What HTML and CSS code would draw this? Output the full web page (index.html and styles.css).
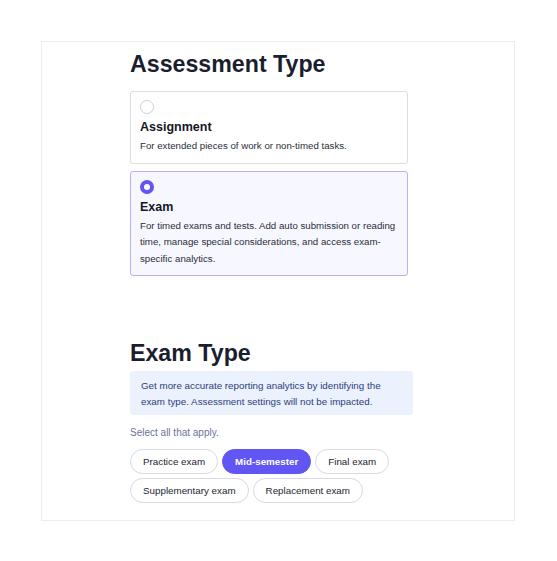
FILE: index.html
```html
<!DOCTYPE html>
<html lang="en">
<head>
  <meta charset="UTF-8">
  <title>Assessment Type</title>
  <link rel="stylesheet" href="styles.css">
</head>
<body>
  <div class="panel">
    <div class="content">
      <h2>Assessment Type</h2>

      <label class="option">
        <span class="radio"></span>
        <span class="option-title">Assignment</span>
        <span class="option-desc">For extended pieces of work or non-timed tasks.</span>
      </label>

      <label class="option selected">
        <span class="radio"></span>
        <span class="option-title">Exam</span>
        <span class="option-desc">For timed exams and tests. Add auto submission or reading time, manage special considerations, and access exam-specific analytics.</span>
      </label>

      <h2 class="exam-heading">Exam Type</h2>
      <div class="info">Get more accurate reporting analytics by identifying the exam type. Assessment settings will not be impacted.</div>
      <div class="hint">Select all that apply.</div>

      <div class="chips">
        <button type="button" class="chip">Practice exam</button>
        <button type="button" class="chip active">Mid-semester</button>
        <button type="button" class="chip">Final exam</button>
        <button type="button" class="chip">Supplementary exam</button>
        <button type="button" class="chip">Replacement exam</button>
      </div>
    </div>
  </div>
</body>
</html>
```

FILE: styles.css
```css
body {
  margin: 0;
  padding: 41px 42px 0 41px;
  font-family: 'Liberation Sans', Arial, sans-serif;
  color: #1b1f2e;
  background: #fff;
}
.panel {
  border: 1px solid #ececf4;
  height: 480px;
  box-sizing: border-box;
}
.content {
  padding: 7px 0 0 88px;
  width: 290px;
}
h2 {
  font-size: 23.2px;
  line-height: 30px;
  font-weight: 700;
  margin: 0 0 12px;
  color: #1a1e2f;
}
.option {
  display: flex;
  flex-direction: column;
  width: 278px;
  box-sizing: border-box;
  border: 1px solid #dcdce2;
  border-radius: 3px;
  padding: 8px 4px 8px 9px;
  margin-bottom: 7px;
}
.option.selected {
  background: #f7f7ff;
  border-color: #b7b0f6;
}
.radio {
  width: 14px;
  height: 14px;
  border: 1px solid #cfcfd6;
  border-radius: 50%;
  box-sizing: border-box;
  margin-bottom: 6px;
}
.selected .radio {
  border: 4px solid #6255f2;
  background: #fff;
}
.option-title {
  font-size: 12.5px;
  line-height: 15px;
  font-weight: 700;
  margin-bottom: 3px;
  color: #15171f;
}
.option-desc {
  font-size: 9.7px;
  line-height: 16.5px;
  color: #2a2d38;
}
.exam-heading {
  margin-top: 62px;
  margin-bottom: 3px;
}
.info {
  background: #ebf1fd;
  color: #2c3f78;
  font-size: 9.8px;
  line-height: 16px;
  padding: 7px 11px 5px;
  border-radius: 3px;
  width: 283px;
  box-sizing: border-box;
}
.hint {
  color: #6b7398;
  font-size: 10px;
  line-height: 14px;
  margin: 11px 0 9px;
}
.chips {
  display: flex;
  flex-wrap: wrap;
  gap: 4px 4px;
  width: 290px;
}
.chip {
  font-family: inherit;
  font-size: 9.8px;
  color: #22252f;
  background: #fff;
  border: 1px solid #d9d9e0;
  border-radius: 13px;
  height: 25px;
  padding: 0 12px;
  cursor: pointer;
}
.chip.active {
  background: #6155f4;
  border-color: #6155f4;
  color: #fff;
  font-weight: 700;
}
```
